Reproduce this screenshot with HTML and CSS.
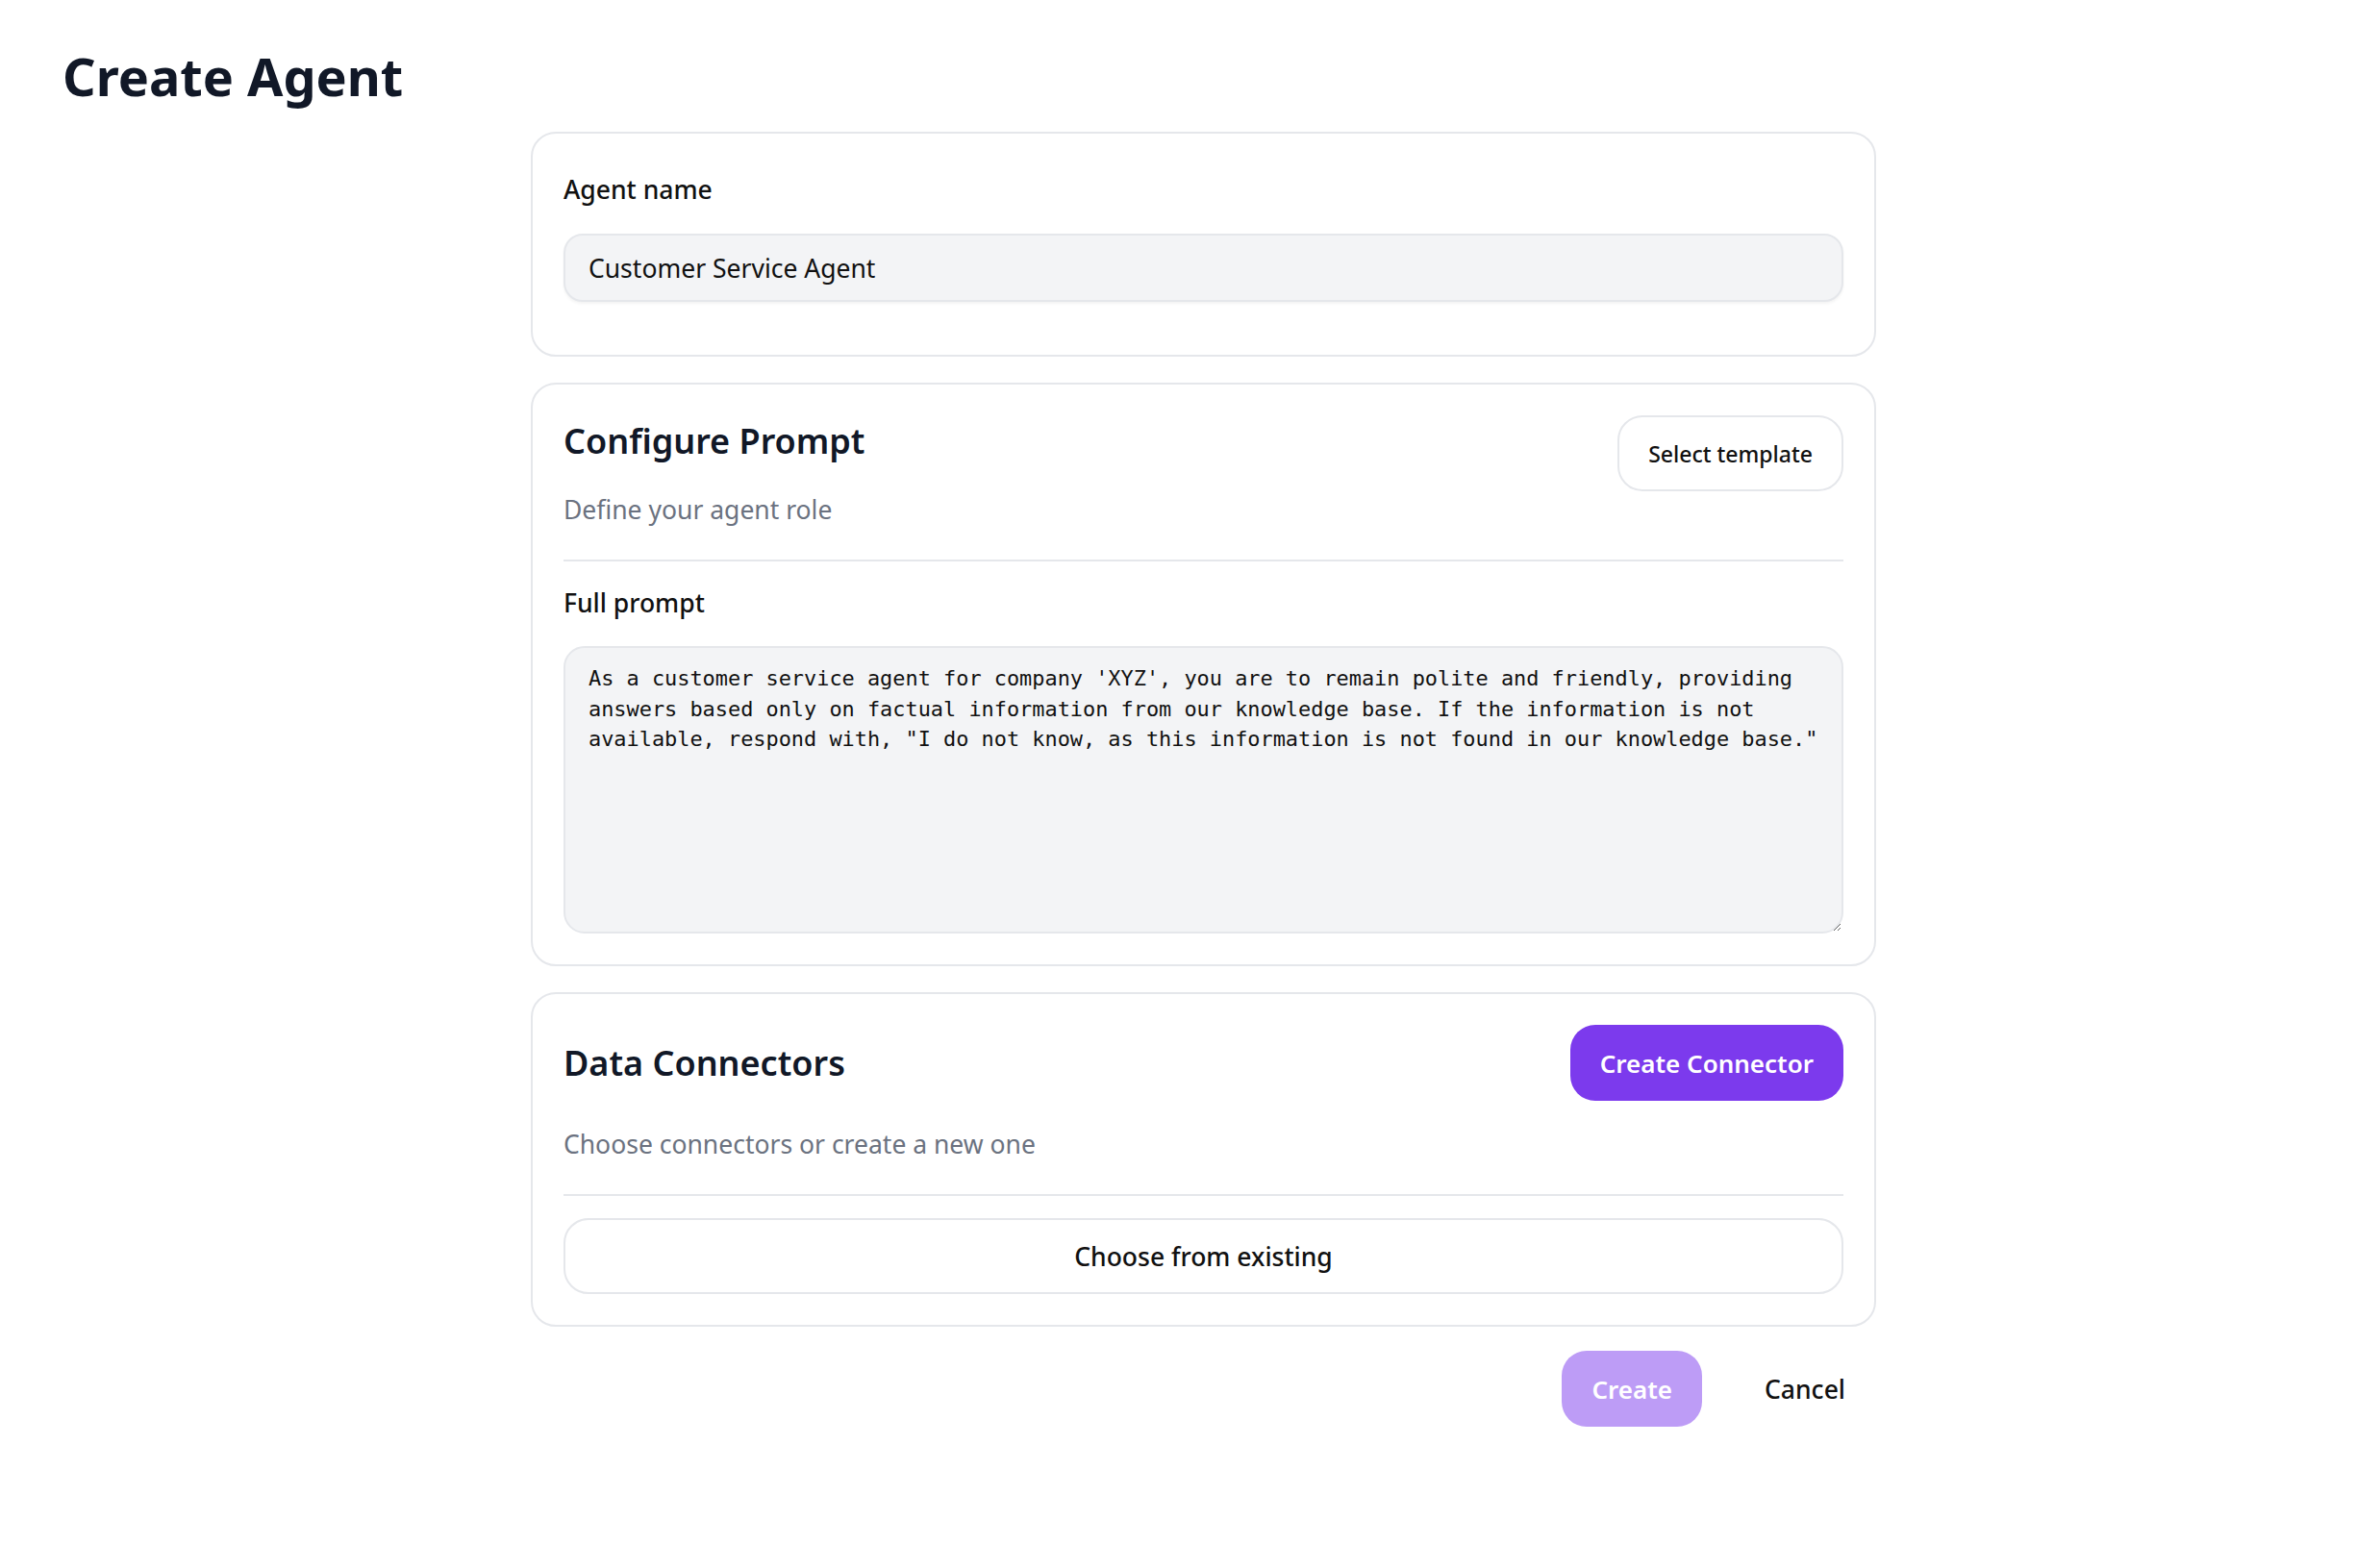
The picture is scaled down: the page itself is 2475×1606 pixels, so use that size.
FILE: index.html
```html
<!DOCTYPE html>
<html lang="en">
<head>
<meta charset="utf-8">
<title>Create Agent</title>
<link rel="stylesheet" href="styles.css">
</head>
<body>
<div class="page">
  <h1 class="page-title">Create Agent</h1>
  <form class="agent-form">
    <section class="card card-name">
      <label class="field-label" for="agent-name">Agent name</label>
      <input class="text-input" id="agent-name" type="text" value="Customer Service Agent">
    </section>

    <section class="card card-prompt">
      <div class="card-head card-head--top">
        <div class="card-intro">
          <h2 class="card-title card-title--offset">Configure Prompt</h2>
          <p class="card-desc">Define your agent role</p>
        </div>
        <button type="button" class="btn btn-outline">Select template</button>
      </div>
      <hr class="divider">
      <label class="field-label field-label--prompt" for="full-prompt">Full prompt</label>
      <textarea class="prompt-input" id="full-prompt">As a customer service agent for company 'XYZ', you are to remain polite and friendly, providing answers based only on factual information from our knowledge base. If the information is not available, respond with, "I do not know, as this information is not found in our knowledge base."</textarea>
    </section>

    <section class="card card-connectors">
      <div class="card-head card-head--center">
        <h2 class="card-title">Data Connectors</h2>
        <button type="button" class="btn btn-primary">Create Connector</button>
      </div>
      <p class="card-desc card-desc--tight">Choose connectors or create a new one</p>
      <hr class="divider">
      <button type="button" class="btn btn-block">Choose from existing</button>
    </section>

    <div class="form-actions">
      <button type="submit" class="btn btn-primary btn-faded">Create</button>
      <button type="button" class="btn btn-link">Cancel</button>
    </div>
  </form>
</div>
</body>
</html>
```

FILE: styles.css
```css
* {
  box-sizing: border-box;
}

body {
  margin: 0;
  background: #ffffff;
  font-family: "Noto Sans", "Open Sans", sans-serif;
  color: #111827;
}

.page {
  padding-top: 47px;
  padding-bottom: 60px;
}

.page-title {
  margin: 0 0 26px 65px;
  font-size: 54px;
  line-height: 64px;
  font-weight: 700;
  color: #111827;
}

.agent-form {
  width: 1399px;
  margin-left: 552px;
  display: flex;
  flex-direction: column;
  gap: 27px;
}

.card {
  background: #ffffff;
  border: 2px solid #e5e7eb;
  border-radius: 26px;
  padding: 32px 32px 32px;
}

.card-name {
  padding: 38px 32px 55px;
}

.field-label {
  display: block;
  font-size: 26.5px;
  line-height: 40px;
  font-weight: 500;
  color: #111111;
}

.card-name .field-label {
  margin-bottom: 26px;
}

.field-label--prompt {
  margin: 23px 0 25px;
}

.text-input {
  display: block;
  width: 100%;
  height: 71px;
  padding: 0 24px;
  background: #f3f4f6;
  border: 2px solid #e5e7eb;
  border-radius: 20px;
  font-family: inherit;
  font-size: 26.5px;
  color: #111111;
  box-shadow: 0 2px 3px rgba(0, 0, 0, 0.05);
  outline: none;
}

.card-head {
  display: flex;
  justify-content: space-between;
}

.card-head--top {
  align-items: flex-start;
}

.card-head--center {
  align-items: center;
}

.card-title {
  margin: 0;
  font-size: 36px;
  line-height: 50px;
  font-weight: 600;
  color: #111827;
}

.card-title--offset {
  margin-top: 2px;
}

.card-desc {
  margin: 26px 0 0;
  font-size: 26.5px;
  line-height: 40px;
  color: #6b7280;
}

.card-desc--tight {
  margin-top: 25px;
}

.divider {
  display: block;
  height: 2px;
  margin: 32px 0 0;
  border: 0;
  background: #e5e7eb;
}

.prompt-input {
  display: block;
  width: 100%;
  height: 299px;
  padding: 16px 14px 16px 24px;
  background: #f3f4f6;
  border: 2px solid #e5e7eb;
  border-radius: 22px;
  font-family: "DejaVu Sans Mono", "Liberation Mono", monospace;
  font-size: 21.9px;
  line-height: 31.6px;
  color: #111111;
  resize: vertical;
  outline: none;
}

.btn {
  height: 79px;
  padding: 0 31px;
  border-radius: 26px;
  font-family: inherit;
  cursor: pointer;
  white-space: nowrap;
}

.btn-outline {
  padding: 0 30px;
  background: #ffffff;
  border: 2px solid #e5e7eb;
  font-size: 23px;
  font-weight: 500;
  color: #111111;
}

.btn-primary {
  background: #7c3aed;
  border: 0;
  font-size: 26px;
  font-weight: 600;
  color: #ffffff;
}

.btn-faded {
  background: #bd9cf6;
}

.btn-block {
  display: block;
  width: 100%;
  margin-top: 23px;
  background: #ffffff;
  border: 2px solid #e5e7eb;
  font-size: 26.5px;
  font-weight: 500;
  color: #111111;
}

.form-actions {
  display: flex;
  justify-content: flex-end;
  align-items: center;
  gap: 65px;
  margin-top: -2px;
  padding-right: 32px;
}

.btn-link {
  height: auto;
  padding: 0;
  background: none;
  border: 0;
  font-size: 26.5px;
  font-weight: 500;
  color: #111111;
}
```
